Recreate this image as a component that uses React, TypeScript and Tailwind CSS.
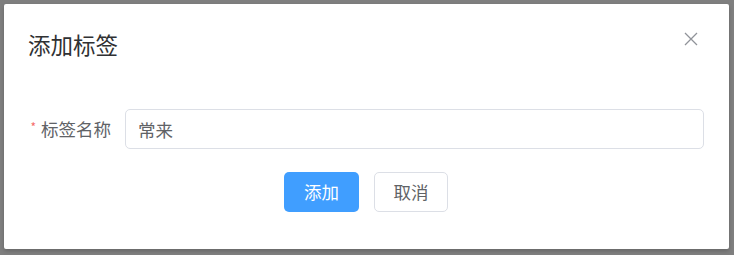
export default function App() {
  return (
    <div
      className="h-[255px] w-[734px] bg-[#7f7f7f] pl-[4px] pt-[4px]"
      style={{ fontFamily: '"Noto Sans CJK SC", "Noto Sans", sans-serif' }}
    >
      <div className="relative h-[245px] w-[725px] rounded-[2px] bg-white shadow-[0_2px_4px_rgba(0,0,0,0.2)]">
        <div className="px-[24px] pb-[12px] pt-[25px]">
          <span className="block text-[22.5px] leading-[30px] text-[#303133]">添加标签</span>
          <button className="absolute right-[28px] top-[25px] flex h-[20px] w-[20px] items-center justify-center">
            <svg width="14" height="14" viewBox="0 0 14 14">
              <path d="M1 1L13 13M13 1L1 13" stroke="#909399" strokeWidth="1.3" />
            </svg>
          </button>
        </div>
        <div className="px-[25px] pt-[38px]">
          <div className="flex h-[40px] items-center">
            <label className="flex w-[96px] shrink-0 items-center justify-end whitespace-nowrap pr-[14px] text-[17.5px] leading-[40px] text-[#606266]">
              <span className="mr-[5px] -mt-[4px] text-[12px] leading-none text-[#f56c6c]">*</span>
              标签名称
            </label>
            <input
              type="text"
              defaultValue="常来"
              className="h-[40px] min-w-0 flex-1 rounded-[5px] border border-[#dcdfe6] px-[12px] text-[17.5px] text-[#606266] outline-none"
              style={{ fontFamily: '"Noto Sans CJK SC", "Noto Sans", sans-serif' }}
            />
          </div>
          <div className="mt-[23px] flex justify-center gap-[15px] pr-[1px]">
            <button className="h-[40px] w-[75px] rounded-[5px] bg-[#409eff] text-[17.5px] text-white">
              添加
            </button>
            <button className="h-[40px] w-[74px] rounded-[5px] border border-[#dcdfe6] bg-white text-[17.5px] text-[#606266]">
              取消
            </button>
          </div>
        </div>
      </div>
    </div>
  );
}
